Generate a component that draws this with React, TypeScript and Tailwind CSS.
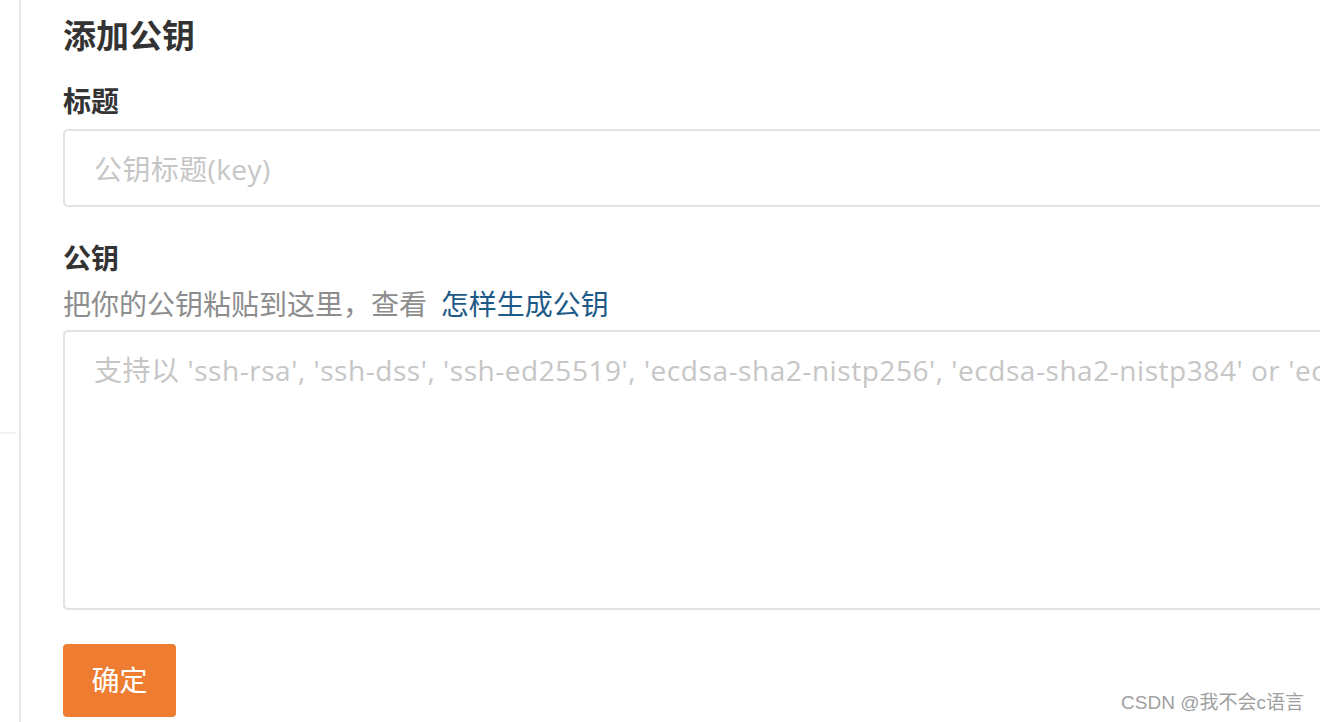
import React from 'react';

const font = { fontFamily: '"Liberation Sans", "Noto Sans CJK SC", sans-serif' };
const keyFont = { fontFamily: '"Open Sans", "Noto Sans CJK SC", sans-serif' };

function Sidebar() {
  return (
    <div className="w-[21px] shrink-0 border-r-2 border-[#e4e7ec]">
      <div className="h-[434px] w-[17px] border-b-2 border-[#f3f4f6]" />
    </div>
  );
}

export default function App() {
  return (
    <div className="relative flex h-[722px] w-[1320px] overflow-hidden bg-white" style={font}>
      <Sidebar />
      <div className="flex flex-col pl-[42px] pt-[17px]">
        <h2 className="text-[33px] font-bold leading-[40px] text-[#333]">添加公钥</h2>

        <label className="mt-[28px] text-[28px] font-bold leading-[36px] text-[#333]">标题</label>
        <input
          className="mt-[8px] h-[78px] w-[1800px] rounded-[5px] border-2 border-[#dfe2e7] px-[29px] pt-[2px] text-[28px] tracking-[0.4px] text-[#333] outline-none placeholder:text-[#c6c6c6]"
          style={keyFont}
          placeholder="公钥标题(key)"
        />

        <label className="mt-[35px] text-[28px] font-bold leading-[36px] text-[#333]">公钥</label>
        <p className="mt-[10px] text-[28px] leading-[36px] text-[#8d8d8d]">
          把你的公钥粘贴到这里，查看 <a className="ml-[6px] text-[#1d5a87]">怎样生成公钥</a>
        </p>
        <textarea
          className="mt-[6px] h-[280px] w-[1800px] resize-none rounded-[5px] border-2 border-[#dfe2e7] px-[29px] py-[18px] text-[28px] leading-[40px] tracking-[0.55px] text-[#333] outline-none placeholder:text-[#c6c6c6]"
          style={keyFont}
          placeholder="支持以 'ssh-rsa', 'ssh-dss', 'ssh-ed25519', 'ecdsa-sha2-nistp256', 'ecdsa-sha2-nistp384' or 'ecdsa-sha2-nistp521' 开头"
        />

        <button className="mt-[34px] h-[73px] w-[113px] rounded-[4px] bg-[#ee7d31] pt-[2px] text-[28px] text-white">
          确定
        </button>
      </div>

      <div className="absolute bottom-[7px] right-[16px] text-[19px] leading-[24px] text-[#9f9f9f]">
        CSDN @我不会c语言
      </div>
    </div>
  );
}
